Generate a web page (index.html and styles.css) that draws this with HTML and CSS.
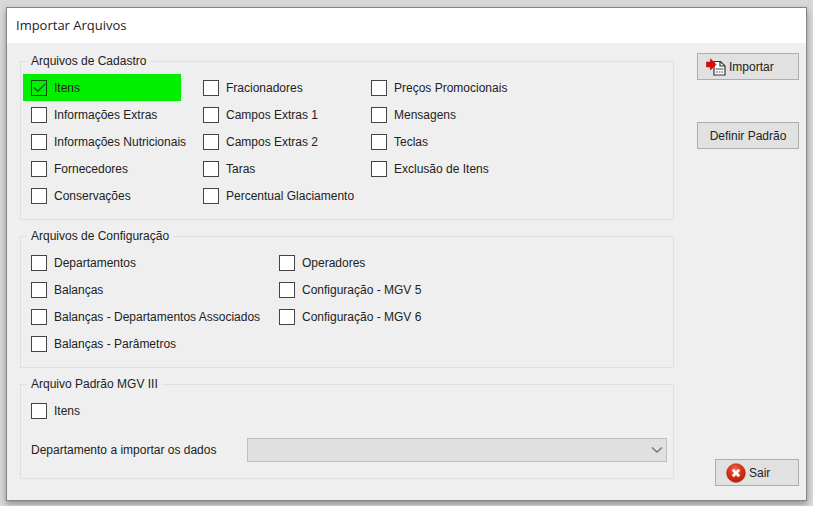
FILE: index.html
```
<!DOCTYPE html>
<html lang="pt-BR">
<head>
  <meta charset="UTF-8" />
  <title>Importar Arquivos</title>
  <link rel="stylesheet" href="styles.css">
</head>
<body>

  <div class="window">
    <header class="title-bar">
      <h1>Importar Arquivos</h1>
    </header>

    <form class="content">
      <div class="groups">
        <fieldset>
          <legend>Arquivos de Cadastro</legend>
          <div class="options cadastro">
            <div class="column">
              <label class="option highlight"><input type="checkbox" checked>Itens</label>
              <label class="option"><input type="checkbox">Informações Extras</label>
              <label class="option"><input type="checkbox">Informações Nutricionais</label>
              <label class="option"><input type="checkbox">Fornecedores</label>
              <label class="option"><input type="checkbox">Conservações</label>
            </div>
            <div class="column">
              <label class="option"><input type="checkbox">Fracionadores</label>
              <label class="option"><input type="checkbox">Campos Extras 1</label>
              <label class="option"><input type="checkbox">Campos Extras 2</label>
              <label class="option"><input type="checkbox">Taras</label>
              <label class="option"><input type="checkbox">Percentual Glaciamento</label>
            </div>
            <div class="column">
              <label class="option"><input type="checkbox">Preços Promocionais</label>
              <label class="option"><input type="checkbox">Mensagens</label>
              <label class="option"><input type="checkbox">Teclas</label>
              <label class="option"><input type="checkbox">Exclusão de Itens</label>
            </div>
          </div>
        </fieldset>

        <fieldset>
          <legend>Arquivos de Configuração</legend>
          <div class="options configuracao">
            <div class="column">
              <label class="option"><input type="checkbox">Departamentos</label>
              <label class="option"><input type="checkbox">Balanças</label>
              <label class="option"><input type="checkbox">Balanças - Departamentos Associados</label>
              <label class="option"><input type="checkbox">Balanças - Parâmetros</label>
            </div>
            <div class="column">
              <label class="option"><input type="checkbox">Operadores</label>
              <label class="option"><input type="checkbox">Configuração - MGV 5</label>
              <label class="option"><input type="checkbox">Configuração - MGV 6</label>
            </div>
          </div>
        </fieldset>

        <fieldset>
          <legend>Arquivo Padrão MGV III</legend>
          <label class="option"><input type="checkbox">Itens</label>
          <div class="department">
            <label for="departamento">Departamento a importar os dados</label>
            <div class="select-box">
              <select id="departamento" disabled>
                <option></option>
              </select>
              <svg class="chevron" width="12" height="8" viewBox="0 0 12 8">
                <path d="M1 1.5 L6 6 L11 1.5" fill="none" stroke="#777" stroke-width="1.5" />
              </svg>
            </div>
          </div>
        </fieldset>
      </div>

      <div class="actions">
        <button type="button">
          <svg width="20" height="18" viewBox="0 0 20 18">
            <path d="M8 3.500H14.500L19 8V17H8Z" fill="#fff" stroke="#333" stroke-width="1.200" />
            <path d="M14 3.500V8H19" fill="none" stroke="#333" stroke-width="1.200" />
            <path d="M9.500 11H17.500M10 14H12M13 14H14.500M15.500 14H17" fill="none" stroke="#444" stroke-width="1.200" />
            <path d="M0.500 4H4.500V0.800L10 6.500L4.500 12V9H0.500Z" fill="#f00000" stroke="#a01010" stroke-width="0.600" />
          </svg>
          Importar
        </button>
        <button type="button" class="default-btn">Definir Padrão</button>
        <button type="button" class="exit-btn">
          <svg width="20" height="20" viewBox="0 0 20 20">
            <defs>
              <radialGradient id="red" cx="45%" cy="30%" r="70%">
                <stop offset="0" stop-color="#f4694a" />
                <stop offset="0.5" stop-color="#dc3415" />
                <stop offset="1" stop-color="#b81c08" />
              </radialGradient>
            </defs>
            <circle cx="10" cy="10" r="9.300" fill="url(#red)" stroke="#a82a18" stroke-width="0.700" />
            <path d="M6.800 6.800L13.200 13.200M13.200 6.800L6.800 13.200" stroke="#fff" stroke-width="2.800" />
          </svg>
          Sair
        </button>
      </div>
    </form>
  </div>

</body>
</html>
```
FILE: styles.css
```
* {
  box-sizing: border-box;
}

body {
  margin: 0;
  padding: 7px 6px 5px;
  min-height: 100vh;
  display: flex;
  background-color: #d8d8d8;
  font-family: "Liberation Sans", Arial, sans-serif;
  font-size: 12px;
  line-height: 16px;
  color: #222;
}

.window {
  flex: 1;
  display: flex;
  flex-direction: column;
  background-color: #efefef;
  border: 1px solid #858585;
  box-shadow: 0 3px 6px rgba(0, 0, 0, 0.35);
}

.title-bar {
  height: 35px;
  padding: 0 9px 2px;
  display: flex;
  align-items: center;
  background-color: #fff;
}

.title-bar h1 {
  margin: 0;
  font-family: "Open Sans", sans-serif;
  font-size: 13px;
  font-weight: normal;
}

.content {
  flex: 1;
  display: flex;
  gap: 23px;
  padding: 10px 7px 14px 13px;
}

.groups {
  flex: 1;
  display: flex;
  flex-direction: column;
  gap: 8px;
}

fieldset {
  min-width: 0;
  margin: 0;
  padding: 5px 2px 10px;
  border: 1px solid #e0e0e0;
}

fieldset:last-child {
  padding-bottom: 16px;
}

legend {
  margin-left: 4px;
  padding: 0 4px;
}

.options {
  display: grid;
}

.cadastro {
  grid-template-columns: 172px 168px 1fr;
}

.configuracao {
  grid-template-columns: 248px 1fr;
}

.option {
  display: flex;
  align-items: center;
  gap: 7px;
  height: 27px;
  padding-left: 8px;
  white-space: nowrap;
}

.highlight {
  width: 158px;
  background-color: #00f000;
}

input[type="checkbox"] {
  appearance: none;
  width: 16px;
  height: 16px;
  margin: 0;
  display: grid;
  place-items: center;
  background-color: #fff;
  border: 1px solid #444;
}

input[type="checkbox"]:checked {
  background-color: transparent;
  border-color: #064b06;
}

input[type="checkbox"]:checked::before {
  content: "";
  width: 10px;
  height: 5px;
  margin-bottom: 3px;
  border-left: 1px solid #064b06;
  border-bottom: 1px solid #064b06;
  transform: rotate(-45deg);
}

.department {
  display: flex;
  align-items: center;
  gap: 16px;
  margin-top: 14px;
  padding: 0 4px 0 8px;
}

.department label {
  width: 200px;
}

.select-box {
  flex: 1;
  position: relative;
}

select {
  display: block;
  appearance: none;
  width: 100%;
  height: 24px;
  padding: 0 20px 0 4px;
  background-color: #e0e0e0;
  border: 1px solid #bfbfbf;
  border-radius: 0;
  font: inherit;
  opacity: 1;
}

.chevron {
  position: absolute;
  top: 8px;
  right: 4px;
}

.actions {
  width: 102px;
  display: flex;
  flex-direction: column;
}

button {
  display: flex;
  align-items: center;
  gap: 3px;
  height: 27px;
  padding: 0 8px;
  background-color: #e1e1e1;
  border: 1px solid #adadad;
  font: inherit;
  color: inherit;
  white-space: nowrap;
}

.default-btn {
  justify-content: center;
  margin-top: 42px;
}

.exit-btn {
  width: 84px;
  margin-top: auto;
  padding-left: 10px;
  align-self: flex-end;
}
```
